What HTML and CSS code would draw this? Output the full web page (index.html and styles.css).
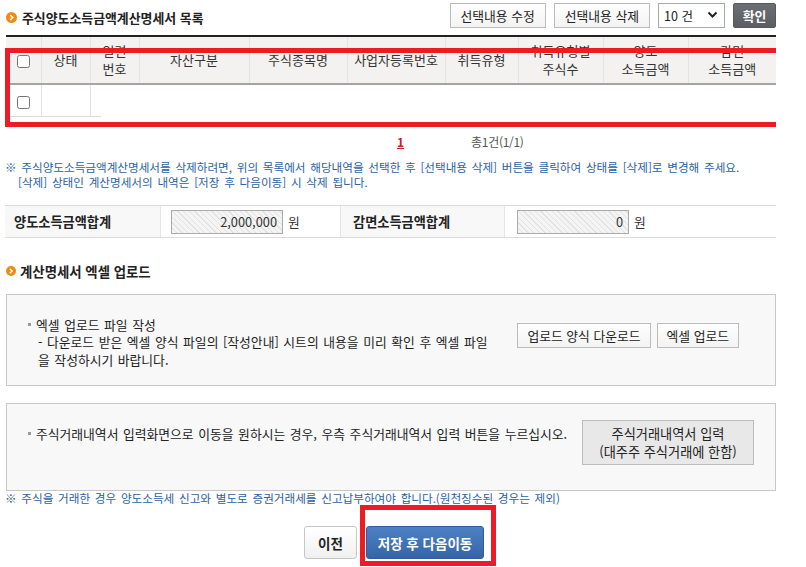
FILE: index.html
```html
<!DOCTYPE html>
<html lang="ko">
<head>
    <meta charset="UTF-8">
    <title>주식양도소득금액계산명세서 목록</title>
    <link rel="stylesheet" href="styles.css">
</head>
<body>
    <div class="page">
        <div class="head">
            <h2 class="title">
                <svg class="dot" width="11" height="11" viewBox="0 0 11 11"><circle cx="5.5" cy="5.5" r="5.5" fill="#ef8a12"/><path d="M4.2 3 L6.7 5.5 L4.2 8" fill="none" stroke="#fff" stroke-width="1.7"/></svg>
                주식양도소득금액계산명세서 목록
            </h2>
            <div class="tools">
                <button class="btn">선택내용 수정</button>
                <button class="btn">선택내용 삭제</button>
                <div class="select">10 건
                    <svg width="11" height="8" viewBox="0 0 11 8"><path d="M1.5 1.5 L5.5 5.5 L9.5 1.5" fill="none" stroke="#222" stroke-width="2"/></svg>
                </div>
                <button class="btn dark">확인</button>
            </div>
        </div>

        <table class="list">
            <colgroup>
                <col style="width:35px"><col style="width:49px"><col style="width:49px"><col style="width:110px"><col style="width:98px">
                <col style="width:98px"><col style="width:73px"><col style="width:85px"><col style="width:85px"><col style="width:88px">
            </colgroup>
            <thead>
                <tr>
                    <th><input type="checkbox"></th>
                    <th>상태</th>
                    <th>일련<br>번호</th>
                    <th>자산구분</th>
                    <th>주식종목명</th>
                    <th>사업자등록번호</th>
                    <th>취득유형</th>
                    <th>취득유형별<br>주식수</th>
                    <th>양도<br>소득금액</th>
                    <th class="last">감면<br>소득금액</th>
                </tr>
            </thead>
            <tbody>
                <tr>
                    <td class="cell"><input type="checkbox"></td>
                    <td class="cell"></td>
                    <td class="rest" colspan="8"></td>
                </tr>
            </tbody>
        </table>

        <div class="paging">
            <a class="page-num">1</a>
            <span class="total">총1건(1/1)</span>
        </div>

        <p class="notice">※ 주식양도소득금액계산명세서를 삭제하려면, 위의 목록에서 해당내역을 선택한 후 [선택내용 삭제] 버튼을 클릭하여 상태를 [삭제]로 변경해 주세요.<br>
            <span class="indent">[삭제] 상태인 계산명세서의 내역은 [저장 후 다음이동] 시 삭제 됩니다.</span></p>

        <div class="sum">
            <div class="sum-label">양도소득금액합계</div>
            <div class="sum-value"><span class="readonly">2,000,000</span> 원</div>
            <div class="sum-label second">감면소득금액합계</div>
            <div class="sum-value second"><span class="readonly">0</span> 원</div>
        </div>

        <h3 class="subtitle">
            <svg class="dot" width="10" height="10" viewBox="0 0 11 11"><circle cx="5.5" cy="5.5" r="5.5" fill="#ef8a12"/><path d="M4.2 3 L6.7 5.5 L4.2 8" fill="none" stroke="#fff" stroke-width="1.7"/></svg>
            계산명세서 엑셀 업로드
        </h3>

        <div class="box upload">
            <div class="box-text">
                <div class="item">엑셀 업로드 파일 작성</div>
                <div class="sub">- 다운로드 받은 엑셀 양식 파일의 [작성안내] 시트의 내용을 미리 확인 후 엑셀 파일<br>을 작성하시기 바랍니다.</div>
            </div>
            <div class="box-buttons">
                <button class="btn">업로드 양식 다운로드</button>
                <button class="btn">엑셀 업로드</button>
            </div>
        </div>

        <div class="box trade">
            <div class="item">주식거래내역서 입력화면으로 이동을 원하시는 경우, 우측 주식거래내역서 입력 버튼을 누르십시오.</div>
            <button class="btn gray">주식거래내역서 입력<br>(대주주 주식거래에 한함)</button>
        </div>

        <p class="notice bottom">※ 주식을 거래한 경우 양도소득세 신고와 별도로 증권거래세를 신고납부하여야 합니다.(원천징수된 경우는 제외)</p>

        <div class="actions">
            <button class="btn prev">이전</button>
            <button class="btn primary">저장 후 다음이동</button>
        </div>

        <div class="mark mark-list"></div>
        <div class="mark mark-save"></div>
    </div>
</body>
</html>
```

FILE: styles.css
```css
body {
    margin: 0;
    font-family: "Noto Sans CJK KR", "Noto Sans", sans-serif;
    font-size: 12.8px;
    color: #333;
    background-color: #fff;
}

.page {
    position: relative;
    width: 770px;
    height: 567px;
    padding-left: 6px;
    overflow: hidden;
}

.head {
    display: flex;
    justify-content: space-between;
    align-items: center;
    height: 35px;
}

.title {
    display: flex;
    align-items: center;
    gap: 5px;
    margin: 0;
    font-size: 12.9px;
    font-weight: bold;
    color: #222;
    padding-bottom: 1px;
}

.dot {
    display: block;
}

.tools {
    display: flex;
    align-items: center;
    gap: 8px;
    margin-bottom: 5px;
}

.btn {
    font-family: inherit;
    font-size: 12.8px;
    color: #222;
    height: 25px;
    padding: 0 9px;
    border: 1px solid #bcbcbc;
    background: linear-gradient(#fff, #f3f3f3);
    cursor: pointer;
}

.tools .btn {
    padding: 0 10px;
}

.btn.dark {
    width: 43px;
    padding: 0;
    color: #fff;
    font-weight: bold;
    border: 1px solid #55585d;
    border-radius: 2px;
    background: linear-gradient(#6c6f74, #5a5d62);
}

.select {
    display: flex;
    align-items: center;
    justify-content: space-between;
    box-sizing: border-box;
    width: 67px;
    height: 25px;
    padding: 0 6px 0 5px;
    border: 1px solid #a9a9a9;
    font-size: 12.5px;
    color: #222;
    background-color: #fff;
}

/* list table */
.list {
    width: 770px;
    border-collapse: collapse;
    table-layout: fixed;
    border-top: 2px solid #222;
}

.list th {
    height: 46px;
    padding: 0;
    font-size: 13px;
    font-weight: normal;
    line-height: 18px;
    color: #333;
    background-color: #f3f2f0;
    border-right: 1px solid #e3e3e3;
    border-bottom: 2px solid #a4a4a4;
}

.list th.last {
    border-right: none;
}

.list input[type=checkbox] {
    width: 13px;
    height: 13px;
    margin: 0;
    vertical-align: middle;
}

.list td {
    height: 31px;
    padding: 0;
    text-align: center;
}

.list td.cell {
    border-right: 1px solid #e3e3e3;
    border-bottom: 1px solid #dcdcdc;
}

.list td.rest {
    background: linear-gradient(#dcdcdc, #dcdcdc) no-repeat left bottom / 10px 1px;
}

.paging {
    display: flex;
    align-items: center;
    height: 16px;
    margin-top: 16px;
    padding-left: 391px;
    font-size: 12px;
}

.page-num {
    color: #d21a1a;
    font-weight: bold;
    text-decoration: underline;
}

.total {
    margin-left: 67px;
    color: #555;
    letter-spacing: -0.3px;
}

.notice {
    margin: 11px 0 0 -1px;
    font-size: 11.6px;
    line-height: 15px;
    color: #2a62a6;
    word-spacing: 1.5px;
}

.notice .indent {
    padding-left: 13px;
}

.notice.bottom {
    margin-top: 0;
}

/* totals */
.sum {
    display: grid;
    grid-template-columns: 156px 179px 165px 270px;
    height: 31px;
    margin-top: 15px;
    margin-left: -1px;
    border-top: 1px solid #dcdcdc;
    border-bottom: 1px solid #dcdcdc;
}

.sum-label {
    display: flex;
    align-items: center;
    padding-left: 9px;
    font-size: 13.2px;
    font-weight: bold;
    color: #222;
    background-color: #f8f8f8;
    border-right: 1px solid #e4e4e4;
}

.sum-label.second {
    padding-left: 12px;
    border-left: 1px solid #e4e4e4;
}

.sum-value {
    display: flex;
    align-items: center;
    gap: 5px;
    padding-left: 10px;
}

.sum-value.second {
    padding-left: 12px;
}

.readonly {
    box-sizing: border-box;
    width: 112px;
    height: 24px;
    line-height: 22px;
    padding-right: 5px;
    text-align: right;
    color: #333;
    border: 1px solid #aaa;
    background: repeating-linear-gradient(45deg, #f4f4f4 0, #f4f4f4 3px, #e2e2e2 3px, #e2e2e2 4px);
}

.subtitle {
    display: flex;
    align-items: center;
    gap: 4px;
    height: 20px;
    margin: 23px 0 0;
    font-size: 13.4px;
    font-weight: bold;
    color: #222;
}

/* boxes */
.box {
    display: flex;
    justify-content: space-between;
    box-sizing: border-box;
    width: 770px;
    border: 1px solid #c8c8c8;
    background-color: #f8f8f8;
}

.box.upload {
    align-items: center;
    height: 92px;
    margin-top: 13px;
    padding: 0 36px 0 20px;
}

.box.trade {
    align-items: flex-start;
    height: 88px;
    margin-top: 17px;
    padding: 16px 21px 0 20px;
}

.item {
    position: relative;
    padding-left: 9px;
    line-height: 17.5px;
    color: #222;
    word-spacing: 1px;
}

.item::before {
    content: "";
    position: absolute;
    left: 1px;
    top: 7px;
    width: 3px;
    height: 3px;
    background-color: #999;
}

.box.trade .item {
    margin-top: 5px;
}

.sub {
    padding-left: 11px;
    line-height: 17.5px;
    color: #222;
    word-spacing: 1px;
}

.box-text {
    padding-top: 4px;
}

.box-buttons {
    display: flex;
    gap: 6px;
    margin-bottom: 10px;
}

.btn.gray {
    width: 172px;
    height: 45px;
    padding: 0;
    line-height: 18px;
    border: 1px solid #bdbdbd;
    background: #e8e8e8;
    font-size: 13.2px;
}

.actions {
    display: flex;
    justify-content: center;
    gap: 9px;
    margin-top: 20px;
    padding-left: 6px;
}

.btn.prev {
    width: 53px;
    height: 33px;
    padding: 0;
    font-size: 13.5px;
    font-weight: bold;
    border: 1px solid #c6c6c6;
    border-radius: 3px;
    background: linear-gradient(#fff, #f0f0f0);
}

.btn.primary {
    width: 118px;
    height: 33px;
    padding: 0;
    font-size: 13.5px;
    font-weight: bold;
    color: #fff;
    border: 1px solid #2f5c9c;
    border-radius: 3px;
    background: linear-gradient(#4d81c4, #3565a8);
}

/* red annotation frames drawn over the page */
.mark {
    position: absolute;
    box-sizing: border-box;
    border: 5px solid #ed1c24;
}

.mark-list {
    left: 5px;
    top: 48px;
    width: 784px;
    height: 79px;
}

.mark-save {
    left: 360px;
    top: 505px;
    width: 136px;
    height: 61px;
}
```
